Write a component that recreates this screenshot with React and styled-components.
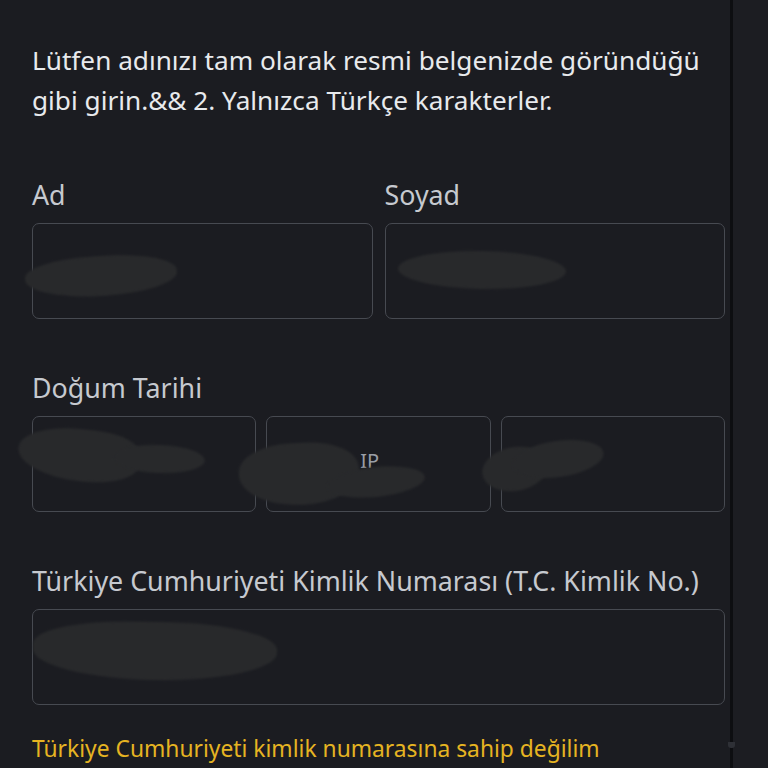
import React from "react";
import styled, { createGlobalStyle } from "styled-components";

const Global = createGlobalStyle`
  html, body {
    margin: 0;
    padding: 0;
    background: #1b1c21;
  }
  body {
    font-family: "Noto Sans", "Open Sans", sans-serif;
    overflow: hidden;
  }
`;

const Page = styled.div`
  display: flex;
  width: 768px;
  height: 768px;
  overflow: hidden;
  background: #1b1c21;
`;

const Main = styled.div`
  flex: 0 0 730px;
  box-sizing: border-box;
  padding: 40px 5px 0 32px;
  display: flex;
  flex-direction: column;
`;

const Track = styled.div`
  flex: 0 0 3px;
  position: relative;
  background: #0d0e11;
`;

const ThumbEnd = styled.span`
  position: absolute;
  left: -2px;
  top: 742px;
  width: 7px;
  height: 6px;
  border-radius: 0 0 3px 3px;
  background: #2e3036;
`;

const Side = styled.div`
  flex: 1;
  background: #1c1d22;
`;

const Intro = styled.p`
  margin: 0 0 59px;
  font-size: 26.2px;
  line-height: 40px;
  color: #e8eaed;
`;

const Field = styled.div`
  display: flex;
  flex-direction: column;
  margin-bottom: ${(p) => p.$gap || 0}px;
`;

const Label = styled.div`
  font-size: 26.8px;
  line-height: 32px;
  color: #c6c9cf;
  margin-bottom: 12px;
  white-space: nowrap;
`;

const Row = styled.div`
  display: grid;
  grid-template-columns: repeat(${(p) => p.$cols}, 1fr);
  gap: ${(p) => p.$gap}px;
`;

const Input = styled.div`
  position: relative;
  height: 94px;
  border: 1px solid #474a51;
  border-radius: 7px;
  background: #1b1c21;
`;

const Hint = styled.span`
  position: absolute;
  left: 93px;
  top: 32px;
  font-size: 20px;
  line-height: 24px;
  color: #9a9ea6;
`;

const Smudge = styled.span`
  position: absolute;
  left: ${(p) => p.$x}px;
  top: ${(p) => p.$y}px;
  width: ${(p) => p.$w}px;
  height: ${(p) => p.$h}px;
  border-radius: ${(p) => p.$r || "40% 50% 50% 45%"};
  background: #28292b;
  transform: rotate(${(p) => p.$rot || 0}deg);
  filter: blur(1.2px);
`;

const Link = styled.div`
  margin-top: 28px;
  font-size: 22.8px;
  line-height: 32px;
  color: #e6b422;
  white-space: nowrap;
`;

export default function App() {
  return (
    <Page>
      <Global />
      <Main>
        <Intro>
          Lütfen adınızı tam olarak resmi belgenizde göründüğü gibi girin.&amp;&amp; 2. Yalnızca Türkçe karakterler.
        </Intro>

        <Row $cols={2} $gap={12}>
          <Field $gap={53}>
            <Label>Ad</Label>
            <Input>
              <Smudge $x={-8} $y={32} $w={152} $h={40} $rot={-4} $r="45% 50% 50% 55%" />
            </Input>
          </Field>
          <Field $gap={53}>
            <Label>Soyad</Label>
            <Input>
              <Smudge $x={12} $y={27} $w={168} $h={38} $rot={1} $r="50% 50% 50% 50%" />
            </Input>
          </Field>
        </Row>

        <Field $gap={53}>
          <Label>Doğum Tarihi</Label>
          <Row $cols={3} $gap={10}>
            <Input>
              <Smudge $x={-15} $y={12} $w={122} $h={52} $rot={6} $r="50% 40% 45% 55%" />
              <Smudge $x={80} $y={28} $w={92} $h={28} $rot={2} $r="50%" />
            </Input>
            <Input>
              <Smudge $x={-28} $y={26} $w={120} $h={62} $rot={-3} $r="45% 45% 50% 55%" />
              <Hint>IP</Hint>
              <Smudge $x={60} $y={50} $w={98} $h={30} $rot={-6} $r="50%" />
            </Input>
            <Input>
              <Smudge $x={-20} $y={30} $w={66} $h={44} $rot={-10} $r="50%" />
              <Smudge $x={10} $y={24} $w={92} $h={36} $rot={-8} $r="50% 50% 50% 50%" />
            </Input>
          </Row>
        </Field>

        <Field>
          <Label>Türkiye Cumhuriyeti Kimlik Numarası (T.C. Kimlik No.)</Label>
          <Input>
            <Smudge $x={0} $y={12} $w={244} $h={58} $rot={1} $r="40% 45% 50% 50%" />
          </Input>
        </Field>

        <Link>Türkiye Cumhuriyeti kimlik numarasına sahip değilim</Link>
      </Main>
      <Track>
        <ThumbEnd />
      </Track>
      <Side />
    </Page>
  );
}
